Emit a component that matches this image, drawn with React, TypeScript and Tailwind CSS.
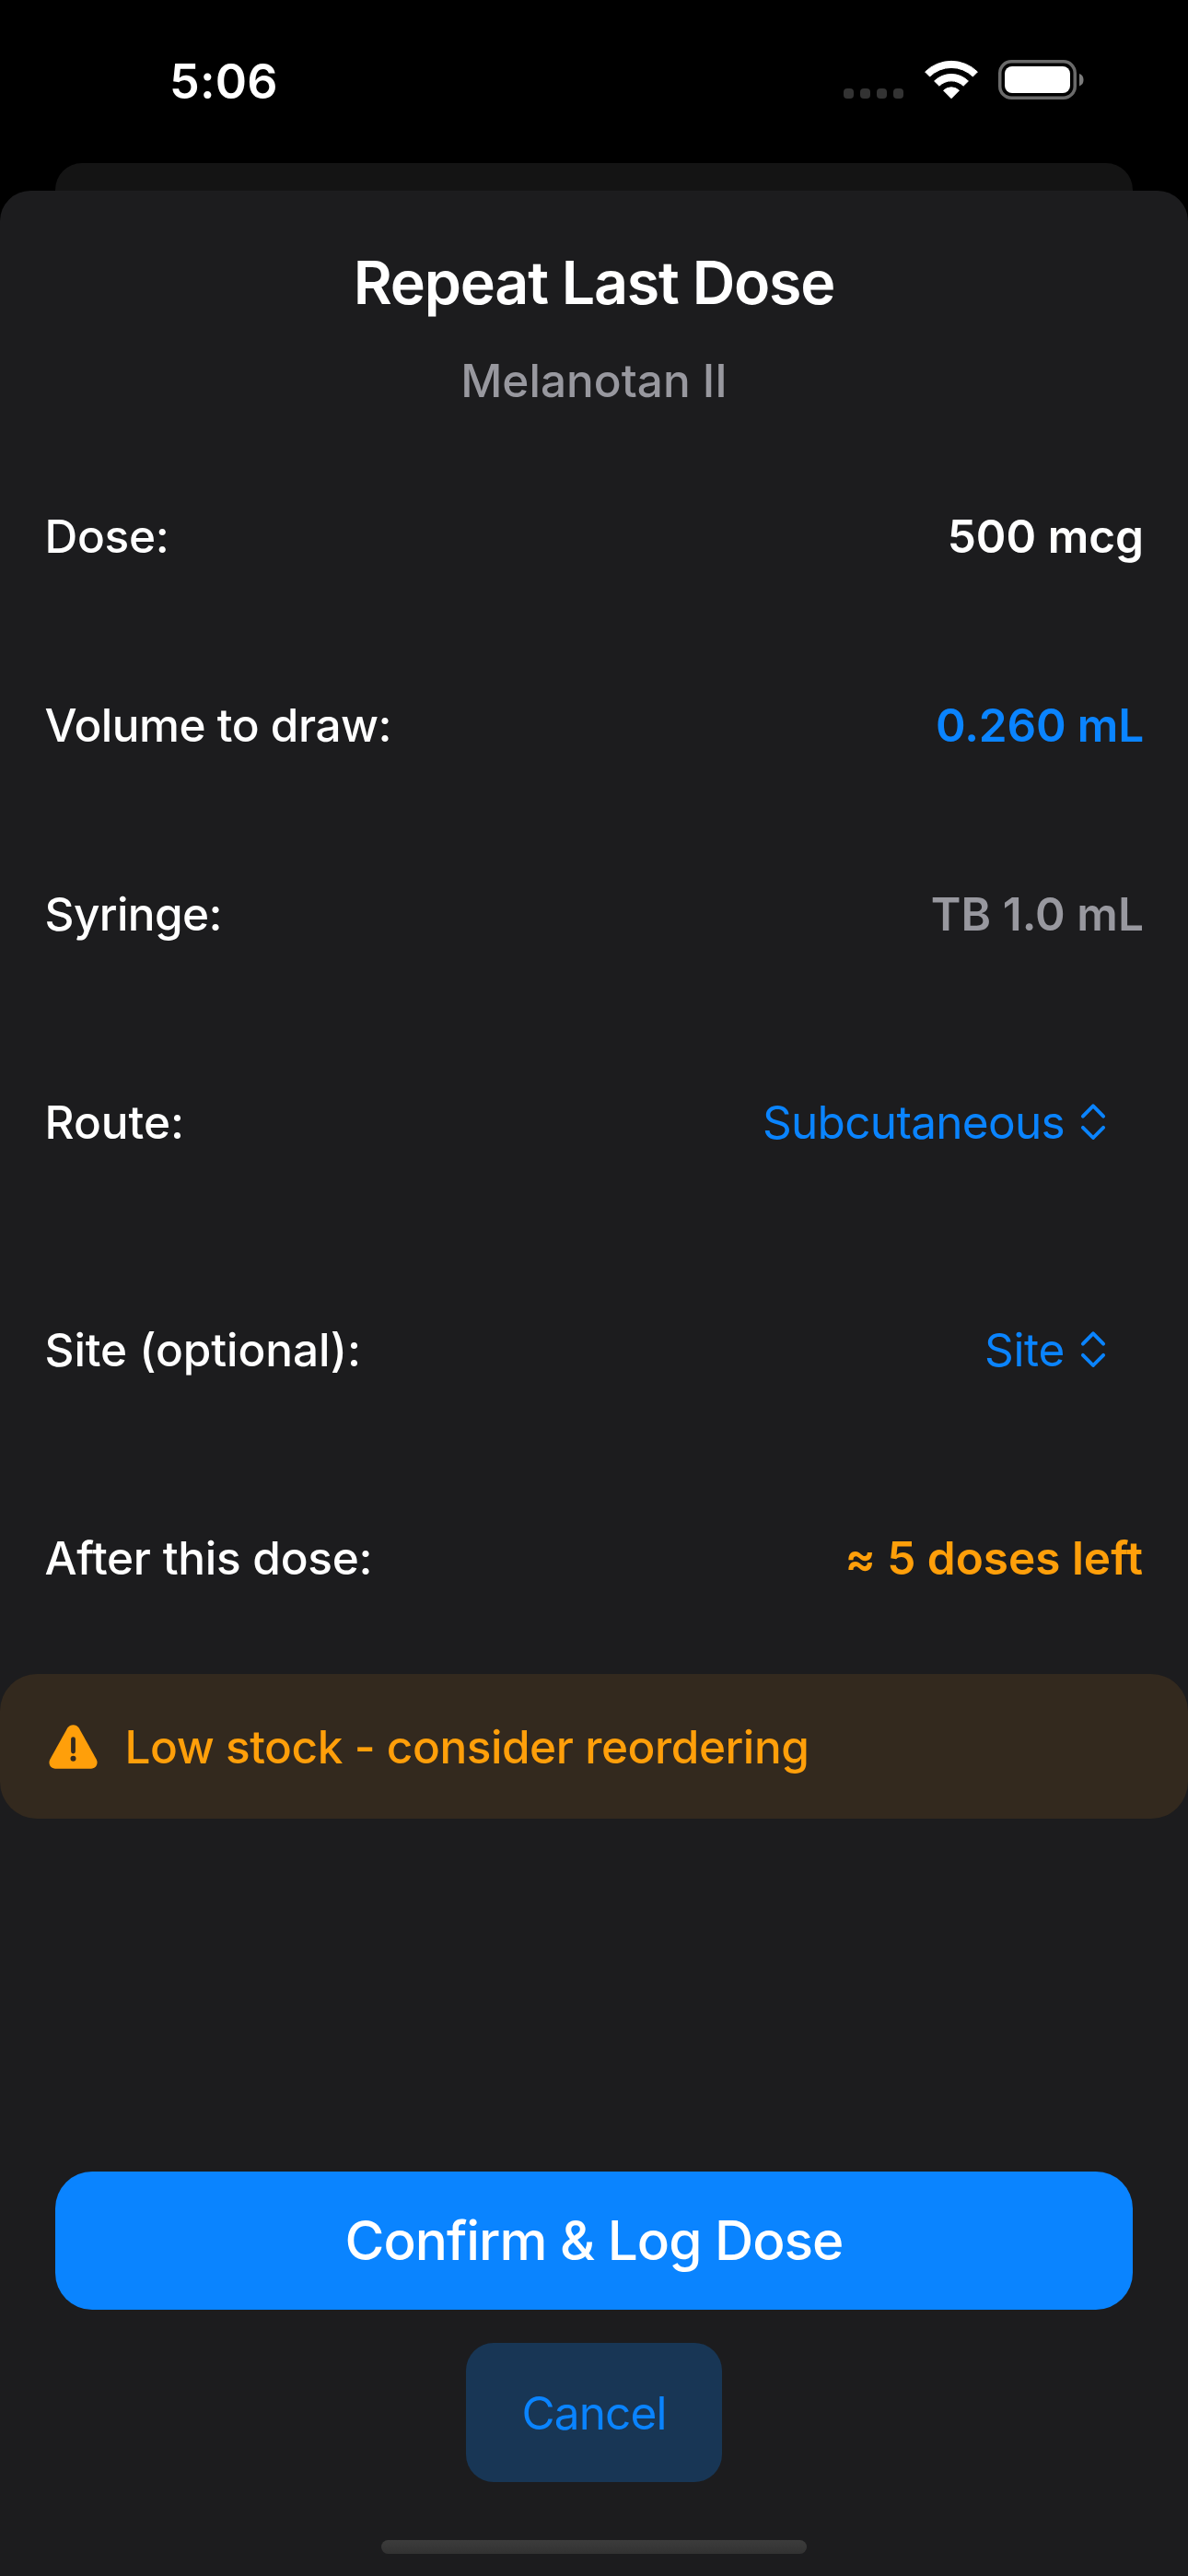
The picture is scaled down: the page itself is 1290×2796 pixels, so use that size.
import type { ReactNode } from "react";

function StatusBar() {
  return (
    <div className="flex h-[177px] items-start justify-between pl-[184px] pr-[112px] text-white">
      <span className="mt-[58px] text-[52px] leading-[62px] font-semibold tracking-[0.24px]">5:06</span>
      <div className="mt-[65px] flex h-[43px] items-start">
        <div className="mt-[31px] mr-[23px] flex gap-[7px]">
          <span className="size-[11px] rounded-[4px] bg-[#333333]" />
          <span className="size-[11px] rounded-[4px] bg-[#333333]" />
          <span className="size-[11px] rounded-[4px] bg-[#333333]" />
          <span className="size-[11px] rounded-[4px] bg-[#333333]" />
        </div>
        <svg className="mr-[22px] h-[43px] w-[58px]" viewBox="0 0 58 43" fill="#fff" stroke="#fff" strokeWidth="1" strokeLinejoin="round">
          <path d="M0.6 13 A40.5 40.5 0 0 1 57.4 13 L52.4 18 A33.4 33.4 0 0 0 5.6 18 Z" />
          <path d="M10.6 23 A26.2 26.2 0 0 1 47.4 23 L42.1 28.2 A18.7 18.7 0 0 0 15.9 28.2 Z" />
          <path d="M20.6 33.2 A12.2 12.2 0 0 1 37.4 33.2 L29 41.7 Z" />
        </svg>
        <svg className="h-[43px] w-[94px]" viewBox="0 0 94 43" fill="none">
          <rect x="1.75" y="1.75" width="81.5" height="39.5" rx="12.5" stroke="#6a6a6a" strokeWidth="3.5" />
          <rect x="7" y="7" width="71" height="29" rx="8" fill="#fff" />
          <path d="M88 15 a7.2 7.2 0 0 1 0 13.4 Z" fill="#7b7b7b" />
        </svg>
      </div>
    </div>
  );
}

function Row({ label, tracking, height = "h-[205px]", children }: { label: string; tracking: string; height?: string; children: ReactNode }) {
  return (
    <div className={`flex ${height} items-center justify-between pr-[48px] pl-[48.5px] text-[49.5px] leading-[60px]`}>
      <span className={`font-medium ${tracking}`}>{label}</span>
      {children}
    </div>
  );
}

function UpDownChevrons() {
  return (
    <svg className="ml-[17px] h-[42px] w-[28px]" viewBox="0 0 28 42" fill="none" stroke="#0a84ff" strokeWidth="3.9" strokeLinecap="round" strokeLinejoin="round">
      <path d="M2.9 14.6 L14 3.4 L25.1 14.6" />
      <path d="M2.9 26.8 L14 38 L25.1 26.8" />
    </svg>
  );
}

export default function App() {
  return (
    <div className="flex h-[2796px] w-[1290px] flex-col overflow-hidden bg-black font-['Inter','Liberation_Sans',sans-serif] whitespace-nowrap">
      <StatusBar />
      <div className="mx-[60px] h-[30px] rounded-t-[29px] bg-[#141414]" />
      <main className="flex grow flex-col rounded-t-[33px] bg-[#1c1c1e] pt-[60px] text-white">
        <h1 className="text-center text-[64.5px] leading-[80px] font-semibold tracking-[-1.21px]">Repeat Last Dose</h1>
        <p className="mt-[36px] mb-[36px] text-center text-[49.5px] leading-[60px] font-medium text-[#98989f]">Melanotan II</p>

        <Row label="Dose:" tracking="tracking-[-0.29px]">
          <span className="font-semibold">500 mcg</span>
        </Row>
        <Row label="Volume to draw:" tracking="tracking-[-0.49px]">
          <span className="font-semibold tracking-[-0.17px] text-[#0a84ff]">0.260 mL</span>
        </Row>
        <Row label="Syringe:" tracking="tracking-[-0.6px]">
          <span className="font-semibold tracking-[0.05px] text-[#98989f]">TB 1.0 mL</span>
        </Row>
        <Row label="Route:" tracking="tracking-normal" height="h-[247px]">
          <button className="mr-[41px] flex items-center text-[#0a84ff]">
            <span className="tracking-[-0.69px]">Subcutaneous</span>
            <UpDownChevrons />
          </button>
        </Row>
        <Row label="Site (optional):" tracking="tracking-[-0.07px]" height="h-[247px]">
          <button className="mr-[41px] flex items-center text-[#0a84ff]">
            <span className="tracking-[-0.32px]">Site</span>
            <UpDownChevrons />
          </button>
        </Row>
        <Row label="After this dose:" tracking="tracking-[-0.26px] [font-variant-ligatures:none]">
          <span className="mr-px font-semibold text-[#ff9f0a] [font-variant-ligatures:none]">≈ 5 doses left</span>
        </Row>

        <div className="mt-[24px] flex h-[157px] items-center rounded-[40px] bg-[#33291e] pl-[53px] text-[#ff9f0a]">
          <svg className="h-[48px] w-[53px]" viewBox="0 0 53 48">
            <path
              d="M20.3 3.6 C23 -1 30 -1 32.7 3.6 L51.6 37.4 C54.2 42.2 51.2 47.7 45.9 47.7 L7.1 47.7 C1.8 47.7 -1.2 42.2 1.4 37.4 Z"
              fill="#ff9f0a"
            />
            <path d="M26.5 15.6 V29" stroke="#33291e" strokeWidth="4.8" strokeLinecap="round" />
            <circle cx="26.5" cy="36.8" r="3" fill="#33291e" />
          </svg>
          <span className="ml-[29.5px] text-[49.5px] leading-[60px] font-medium tracking-[-0.45px]">Low stock - consider reordering</span>
        </div>

        <button className="mx-[60px] mt-[383px] h-[150px] shrink-0 rounded-[40px] bg-[#0a84ff] text-[58.5px] leading-[72px] font-medium tracking-[-1.01px]">
          Confirm &amp; Log Dose
        </button>
        <button className="mt-[36px] h-[151px] w-[278px] shrink-0 self-center rounded-[30px] bg-[#183655] text-[49.5px] leading-[60px] tracking-[-0.87px] text-[#0a84ff]">
          Cancel
        </button>
        <div className="mt-[63px] h-[15px] w-[462px] shrink-0 self-center rounded-full bg-linear-to-b from-[#3c3c3c] to-[#323232]" />
      </main>
    </div>
  );
}
